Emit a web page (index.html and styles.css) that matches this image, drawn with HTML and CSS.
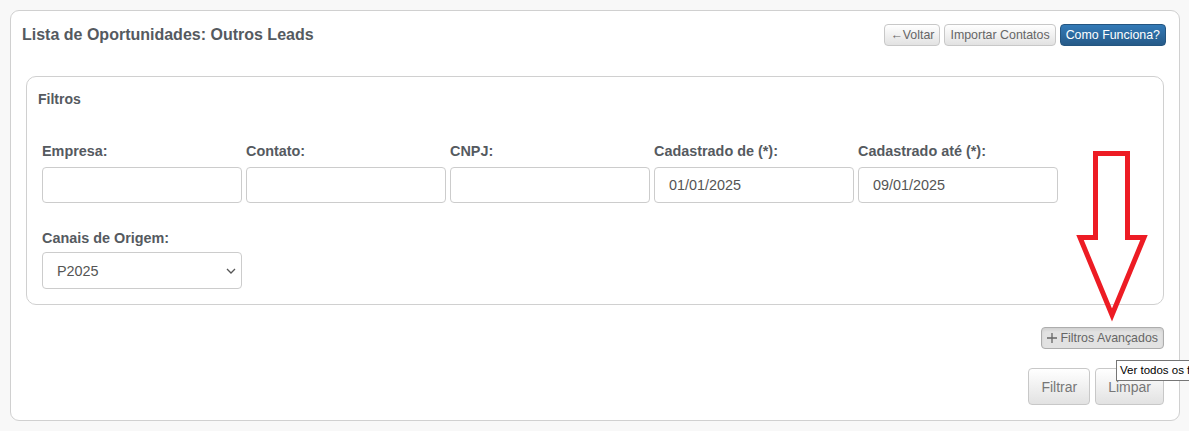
FILE: index.html
```html
<!DOCTYPE html>
<html>
<head>
	<title>Lista de Oportunidades</title>
	<link rel="stylesheet" href="styles.css">
</head>
<body>
	<div class="panel">
		<div class="panel-head">
			<h1>Lista de Oportunidades: Outros Leads</h1>
			<div class="actions">
				<button class="btn btn-xs">&larr;Voltar</button>
				<button class="btn btn-xs">Importar Contatos</button>
				<button class="btn btn-xs btn-primary">Como Funciona?</button>
			</div>
		</div>

		<div class="filters">
			<h2>Filtros</h2>
			<div class="row">
				<div class="field">
					<label>Empresa:</label>
					<input type="text">
				</div>
				<div class="field">
					<label>Contato:</label>
					<input type="text">
				</div>
				<div class="field">
					<label>CNPJ:</label>
					<input type="text">
				</div>
				<div class="field">
					<label>Cadastrado de (*):</label>
					<input type="text" value="01/01/2025">
				</div>
				<div class="field">
					<label>Cadastrado até (*):</label>
					<input type="text" value="09/01/2025">
				</div>
			</div>
			<div class="row row-second">
				<div class="field">
					<label>Canais de Origem:</label>
					<div class="select">
						<span>P2025</span>
						<svg width="10" height="6" viewBox="0 0 10 6"><path d="M1 1l4 4 4-4" fill="none" stroke="#555" stroke-width="1.3"/></svg>
					</div>
				</div>
			</div>
		</div>

		<div class="advanced">
			<button class="btn btn-xs btn-active">
				<svg width="10" height="10" viewBox="0 0 10 10"><path d="M5 0v10M0 5h10" stroke="#666" stroke-width="1.3"/></svg>
				Filtros Avançados
			</button>
		</div>
		<div class="submit">
			<button class="btn btn-lg">Filtrar</button>
			<button class="btn btn-lg">Limpar</button>
		</div>
	</div>

	<div class="tooltip">Ver todos os filtros</div>

	<svg class="arrow" width="90" height="190" viewBox="0 0 90 190">
		<polygon points="25.5,10.5 57.5,10.5 57.5,94.5 74,94.5 42,172 10,94.5 25.5,94.5" fill="none" stroke="#ed1c24" stroke-width="5"/>
	</svg>
</body>
</html>
```

FILE: styles.css
```css
body {
	background-color: #F8F8F8;
	font-family: "Liberation Sans", Arial, sans-serif;
	margin: 0;
	padding: 0;
	overflow: hidden;
	position: relative;
	height: 431px;
}
.panel {
	background-color: #FFF;
	border: 1px solid #D0D0D0;
	border-radius: 9px;
	box-sizing: border-box;
	height: 411px;
	margin: 10px 0 0 10px;
	padding: 13px 15px 0 15px;
	width: 1170px;
}
.panel-head {
	align-items: flex-start;
	display: flex;
	justify-content: space-between;
	margin: 0 -3px 0 -4px;
}
.panel-head h1 {
	color: #555A5F;
	font-size: 16px;
	font-weight: bold;
	line-height: 22px;
	margin: 0;
}
.actions {
	display: flex;
	gap: 4px;
	margin-top: 0;
	padding-right: 1px;
}
.btn {
	background: linear-gradient(#FFF, #E2E2E2);
	border: 1px solid #C8C8C8;
	border-radius: 4px;
	color: #666;
	cursor: pointer;
	font-family: "Liberation Sans", Arial, sans-serif;
}
.btn-xs {
	font-size: 12.4px;
	height: 22px;
	line-height: 18px;
	padding: 0 5px;
}
.btn-primary {
	background: linear-gradient(#337AB7, #265A88);
	border-color: #245580;
	color: #FFF;
}
.btn-active {
	align-items: center;
	background: #E2E2E2;
	border-color: #ADADAD;
	box-shadow: inset 0 2px 3px rgba(0, 0, 0, 0.08);
	color: #666;
	display: flex;
	gap: 3px;
	padding: 0 5px;
}
.btn-lg {
	font-size: 14px;
	height: 37px;
	padding: 0 12px;
	color: #777;
}
.filters {
	border: 1px solid #D0D0D0;
	border-radius: 10px;
	height: 229px;
	box-sizing: border-box;
	margin-top: 30px;
	padding: 12px 15px 0 11px;
}
.filters h2 {
	color: #555A5F;
	font-size: 14px;
	font-weight: bold;
	line-height: 20px;
	margin: 0;
}
.row {
	display: flex;
	gap: 4px;
	margin-top: 34px;
	padding-left: 4px;
}
.row-second {
	margin-top: 27px;
}
.field {
	display: flex;
	flex-direction: column;
	width: 200px;
}
.field label {
	color: #555A5F;
	font-size: 14.4px;
	font-weight: bold;
	line-height: 17px;
	margin-bottom: 7px;
}
.row-second .field label {
	margin-bottom: 5px;
}
.field input {
	border: 1px solid #CCC;
	border-radius: 4px;
	box-sizing: border-box;
	color: #555;
	font-family: "Liberation Sans", Arial, sans-serif;
	font-size: 14.4px;
	height: 36px;
	padding: 0 14px;
	width: 200px;
}
.select {
	align-items: center;
	border: 1px solid #CCC;
	border-radius: 4px;
	box-sizing: border-box;
	color: #555;
	display: flex;
	font-size: 14.4px;
	height: 37px;
	justify-content: space-between;
	padding: 0 5px 0 14px;
	width: 200px;
}
.advanced {
	display: flex;
	justify-content: flex-end;
	margin-top: 22px;
}
.submit {
	display: flex;
	gap: 5px;
	justify-content: flex-end;
	margin-top: 19px;
}
.tooltip {
	background: #FFF;
	border: 1px solid #767676;
	color: #000;
	font-family: "Liberation Sans", Arial, sans-serif;
	font-size: 11.5px;
	left: 1116px;
	line-height: 19px;
	padding: 0 3px;
	position: absolute;
	top: 360px;
	white-space: nowrap;
}
.arrow {
	left: 1070px;
	position: absolute;
	top: 143px;
}
```
